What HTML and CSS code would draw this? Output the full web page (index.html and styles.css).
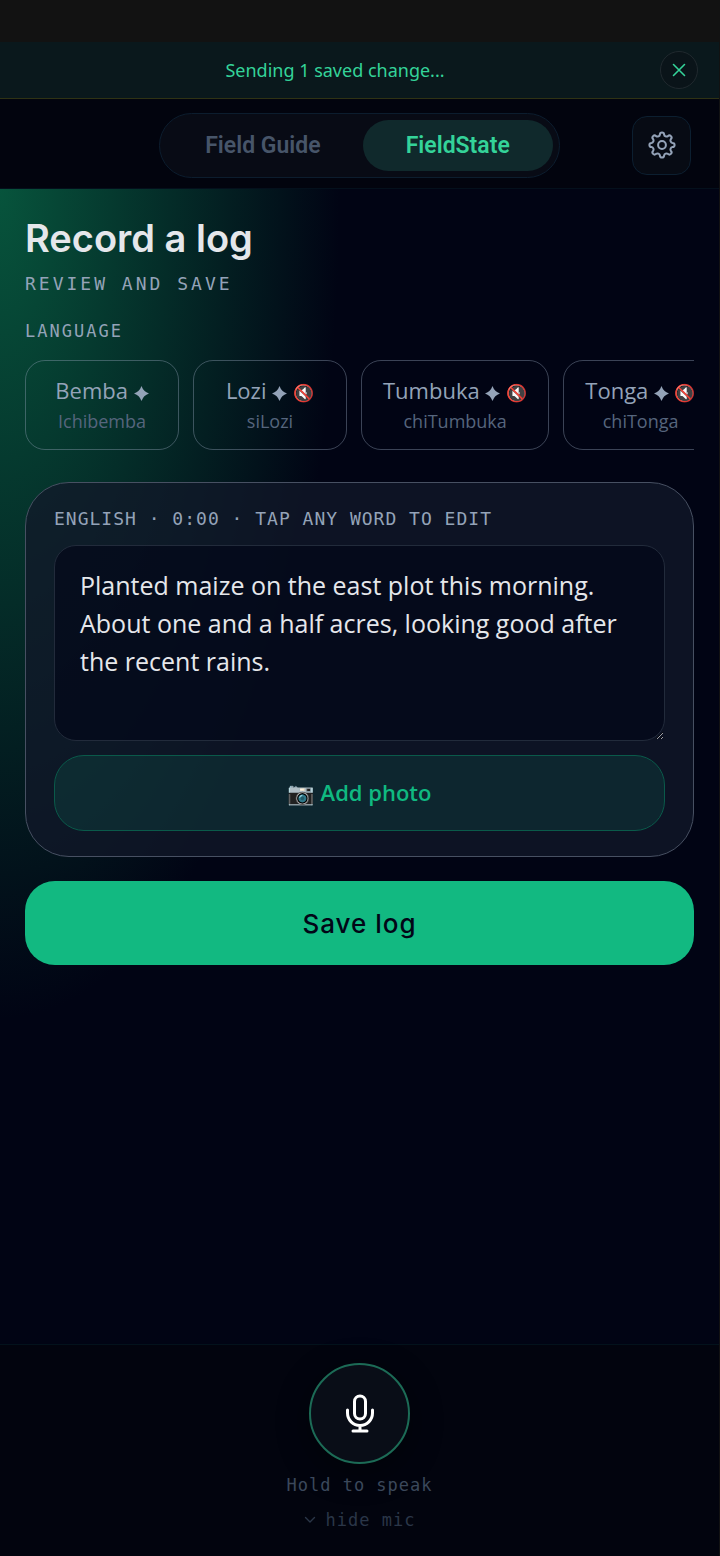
FILE: index.html
```html
<!DOCTYPE html>
<html lang="en">
<head>
<meta charset="utf-8">
<meta name="viewport" content="width=device-width, initial-scale=1">
<title>Record a log</title>
<link rel="stylesheet" href="styles.css">
</head>
<body>
<div class="app">
  <div class="banner" role="status">
    <p class="banner-text">Sending 1 saved change...</p>
    <button class="banner-close" type="button" aria-label="Dismiss">
      <svg width="14" height="14" viewBox="0 0 14 14" fill="none" stroke="currentColor" stroke-width="1.6" stroke-linecap="round"><path d="M1.5 1.5l11 11M12.5 1.5l-11 11"/></svg>
    </button>
  </div>

  <header class="topbar">
    <nav class="tabs">
      <button class="tab" type="button">Field Guide</button>
      <button class="tab tab-active" type="button">FieldState</button>
    </nav>
    <button class="settings" type="button" aria-label="Settings">
      <svg width="30" height="30" viewBox="0 0 30 30" fill="none" stroke="currentColor" stroke-width="2" stroke-linejoin="round">
        <circle cx="15" cy="15" r="3.9"/>
        <path d="M12.9 4.5A2.1 2.1 0 0 1 17.1 4.5A2.4 2.4 0 0 0 20.94 6.09A2.1 2.1 0 0 1 23.91 9.06A2.4 2.4 0 0 0 25.5 12.9A2.1 2.1 0 0 1 25.5 17.1A2.4 2.4 0 0 0 23.91 20.94A2.1 2.1 0 0 1 20.94 23.91A2.4 2.4 0 0 0 17.1 25.5A2.1 2.1 0 0 1 12.9 25.5A2.4 2.4 0 0 0 9.06 23.91A2.1 2.1 0 0 1 6.09 20.94A2.4 2.4 0 0 0 4.5 17.1A2.1 2.1 0 0 1 4.5 12.9A2.4 2.4 0 0 0 6.09 9.06A2.1 2.1 0 0 1 9.06 6.09A2.4 2.4 0 0 0 12.9 4.5z"/>
      </svg>
    </button>
  </header>

  <main class="content">
    <h1 class="title">Record a log</h1>
    <p class="subtitle">REVIEW AND SAVE</p>
    <h2 class="label">LANGUAGE</h2>
    <div class="chips">
      <button class="chip" type="button">
        <span class="chip-name">Bemba <svg class="spark" viewBox="0 0 14 14"><path d="M7 0Q8.800 5.200 14 7Q8.800 8.800 7 14Q5.200 8.800 0 7Q5.200 5.200 7 0z"/></svg></span>
        <span class="chip-native">Ichibemba</span>
      </button>
      <button class="chip" type="button">
        <span class="chip-name">Lozi <svg class="spark" viewBox="0 0 14 14"><path d="M7 0Q8.800 5.200 14 7Q8.800 8.800 7 14Q5.200 8.800 0 7Q5.200 5.200 7 0z"/></svg> <span class="emoji">🔇</span></span>
        <span class="chip-native">siLozi</span>
      </button>
      <button class="chip" type="button">
        <span class="chip-name">Tumbuka <svg class="spark" viewBox="0 0 14 14"><path d="M7 0Q8.800 5.200 14 7Q8.800 8.800 7 14Q5.200 8.800 0 7Q5.200 5.200 7 0z"/></svg> <span class="emoji">🔇</span></span>
        <span class="chip-native">chiTumbuka</span>
      </button>
      <button class="chip" type="button">
        <span class="chip-name">Tonga <svg class="spark" viewBox="0 0 14 14"><path d="M7 0Q8.800 5.200 14 7Q8.800 8.800 7 14Q5.200 8.800 0 7Q5.200 5.200 7 0z"/></svg> <span class="emoji">🔇</span></span>
        <span class="chip-native">chiTonga</span>
      </button>
    </div>

    <section class="card">
      <label class="card-label" for="entry">ENGLISH · 0:00 · TAP ANY WORD TO EDIT</label>
      <textarea class="entry" id="entry" spellcheck="false">Planted maize on the east plot this morning. About one and a half acres, looking good after the recent rains.</textarea>
      <button class="photo" type="button"><span class="emoji">📷</span> Add photo</button>
    </section>

    <button class="save" type="button">Save log</button>
  </main>

  <footer class="dock">
    <button class="mic" type="button" aria-label="Hold to speak">
      <svg width="30" height="40" viewBox="0 0 30 40" fill="none" stroke="currentColor" stroke-width="3" stroke-linecap="round" stroke-linejoin="round"><rect x="9.500" y="2" width="11" height="23" rx="5.500"/><path d="M2.500 16v3a12.500 12.500 0 0 0 25 0v-3M15 31.500v5M8 37h14"/></svg>
    </button>
    <p class="hint">Hold to speak</p>
    <button class="hide" type="button">
      <svg width="12" height="8" viewBox="0 0 12 8" fill="none" stroke="currentColor" stroke-width="1.400" stroke-linecap="round" stroke-linejoin="round"><path d="M1.500 1.500L6 6l4.500-4.500"/></svg>
      hide mic
    </button>
  </footer>
</div>
</body>
</html>
```
FILE: styles.css
```css
* { box-sizing: border-box; }

body {
  margin: 0;
  background: #121212;
  font-family: "Open Sans", "Noto Sans", sans-serif;
  color: #e5e7eb;
}

h1, h2, p { margin: 0; }

button {
  margin: 0;
  padding: 0;
  border: 0;
  background: none;
  color: inherit;
  font: inherit;
}

.app {
  display: flex;
  flex-direction: column;
  min-height: 100vh;
  padding: 42px 1px 0 0;
}

.banner {
  display: flex;
  align-items: center;
  gap: 12px;
  height: 57px;
  padding: 0 21px 0 22px;
  background: #0a181c;
  border-bottom: 1px solid #2f3214;
  color: #34d399;
}

.banner-text {
  flex: 1;
  text-align: center;
  font-family: "Noto Sans", sans-serif;
  font-size: 18px;
}

.banner-close {
  display: grid;
  place-items: center;
  width: 38px;
  height: 38px;
  border: 1px solid #20292e;
  border-radius: 50%;
  background: #0a1419;
}

.topbar {
  display: grid;
  grid-template-columns: 1fr auto 1fr;
  align-items: center;
  height: 90px;
  padding: 3px 28px 0;
  background: #02040e;
  border-bottom: 1px solid #04101c;
}

.tabs {
  grid-column: 2;
  display: flex;
  padding: 6px;
  border: 1px solid #0c1d2e;
  border-radius: 33px;
  background: #080b15;
}

.tab {
  height: 51px;
  padding: 0 43px;
  border-radius: 26px;
  color: #475569;
  font-family: Roboto, sans-serif;
  font-size: 23px;
  font-weight: 600;
}

.tab:first-child { padding: 0 42px 0 39px; }

.tab-active {
  background: #10292c;
  color: #34d399;
}

.settings {
  grid-column: 3;
  justify-self: end;
  display: grid;
  place-items: center;
  width: 59px;
  height: 59px;
  border: 1px solid #0c1f30;
  border-radius: 15px;
  background: #070b14;
  color: #94a3b8;
}

.content {
  flex: 1;
  display: flex;
  flex-direction: column;
  padding: 25px;
  background: radial-gradient(ellipse 340px 830px at 0 0, #07543c, #010414);
}

.title {
  font-family: Inter, sans-serif;
  font-size: 38px;
  font-weight: 600;
  line-height: 48px;
}

.subtitle, .label, .card-label, .hint, .hide {
  font-family: "DejaVu Sans Mono", monospace;
  color: #94a3b8;
}

.subtitle {
  margin-top: 8px;
  font-size: 18px;
  line-height: 28px;
  letter-spacing: 3px;
}

.label {
  margin-top: 20px;
  font-size: 17px;
  font-weight: 400;
  line-height: 26px;
  letter-spacing: 2px;
}

.chips {
  display: flex;
  gap: 14px;
  margin-top: 16px;
  overflow: hidden;
}

.chip {
  display: flex;
  flex: none;
  flex-direction: column;
  align-items: center;
  justify-content: center;
  min-width: 154px;
  height: 90px;
  padding: 0 21px;
  border: 1px solid rgba(148, 163, 184, 0.4);
  border-radius: 20px;
  white-space: nowrap;
}

.chip-name {
  color: #94a3b8;
  font-size: 22px;
  line-height: 32px;
}

.chip-native {
  color: #56657d;
  font-size: 18px;
  line-height: 30px;
}

.spark {
  width: 15px;
  height: 15px;
  fill: currentColor;
  vertical-align: -2px;
}

.emoji {
  font-family: "Noto Color Emoji", sans-serif;
  font-size: 17px;
  line-height: 1;
}

.card {
  display: flex;
  flex-direction: column;
  margin-top: 32px;
  padding: 22px 28px 25px;
  border: 1px solid #475062;
  border-radius: 44px;
  background: rgba(17, 24, 42, 0.75);
}

.card-label {
  font-size: 18px;
  line-height: 28px;
  letter-spacing: 1px;
}

.entry {
  display: block;
  width: 100%;
  height: 196px;
  margin-top: 12px;
  padding: 20px 25px;
  border: 1px solid #222b3b;
  border-radius: 22px;
  background: rgba(3, 7, 24, 0.7);
  color: #e5e7eb;
  font-family: "Open Sans", "Noto Sans", sans-serif;
  font-size: 25px;
  line-height: 38px;
}

.photo {
  height: 76px;
  margin-top: 14px;
  padding-bottom: 2px;
  border: 1px solid #0a5a4a;
  border-radius: 30px;
  background: rgba(16, 185, 129, 0.12);
  color: #10b981;
  font-size: 22px;
  font-weight: 600;
}

.photo .emoji { font-size: 22px; }

.save {
  height: 84px;
  margin-top: 24px;
  border-radius: 30px;
  background: #12b981;
  color: #020617;
  font-family: Inter, sans-serif;
  font-size: 26px;
  font-weight: 500;
  letter-spacing: 1px;
}

.dock {
  display: flex;
  flex-direction: column;
  align-items: center;
  padding: 18px 0 23px;
  border-top: 1px solid #03121c;
  background: #02040e;
}

.mic {
  display: grid;
  place-items: center;
  width: 101px;
  height: 101px;
  border: 2px solid #1c6b56;
  border-radius: 50%;
  background: #090d17;
  color: #fff;
  box-shadow: 0 8px 32px rgba(0, 0, 0, 0.4);
}

.hint {
  margin-top: 8px;
  color: #3b485b;
  font-size: 17px;
  line-height: 26px;
  letter-spacing: 1px;
}

.hide {
  display: flex;
  align-items: center;
  gap: 10px;
  margin-top: 9px;
  color: #2a3648;
  font-size: 17px;
  line-height: 26px;
  letter-spacing: 1px;
}
```
